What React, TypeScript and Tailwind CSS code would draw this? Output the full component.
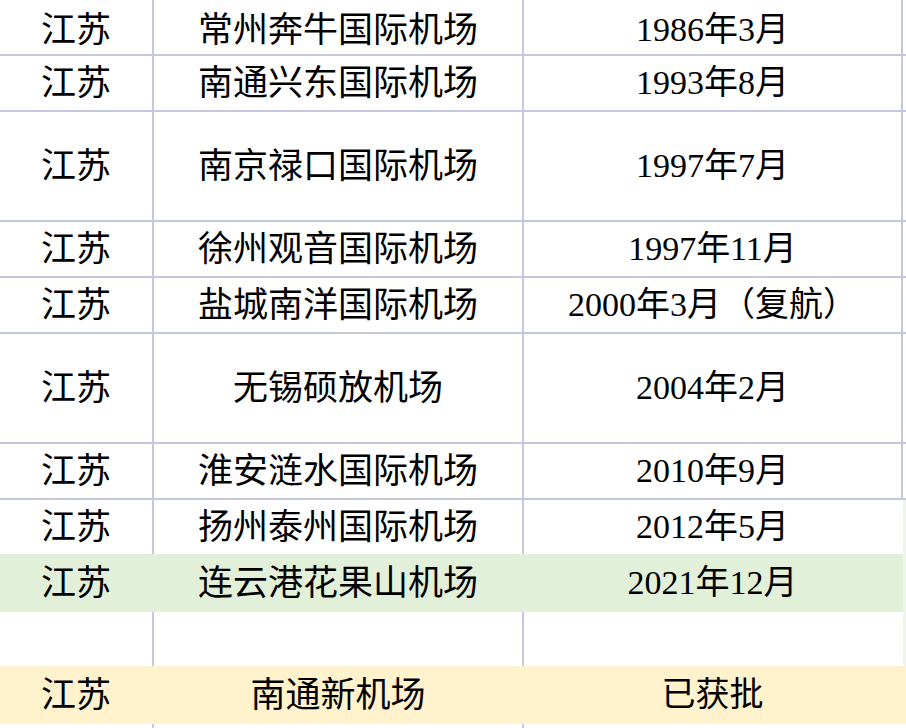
type Row = {
  province: string;
  airport: string;
  date: string;
  h: string;
  pad?: string;
  tone?: "green" | "yellow" | "blank";
  line?: boolean;
  frame?: boolean;
};

const ROWS: Row[] = [
  { province: "江苏", airport: "常州奔牛国际机场", date: "1986年3月", h: "h-[56px]", pad: "pt-[6px]", line: true, frame: true },
  { province: "江苏", airport: "南通兴东国际机场", date: "1993年8月", h: "h-[56px]", line: true, frame: true },
  { province: "江苏", airport: "南京禄口国际机场", date: "1997年7月", h: "h-[110px]", line: true, frame: true },
  { province: "江苏", airport: "徐州观音国际机场", date: "1997年11月", h: "h-[56px]", line: true, frame: true },
  { province: "江苏", airport: "盐城南洋国际机场", date: "2000年3月（复航）", h: "h-[56px]", line: true, frame: true },
  { province: "江苏", airport: "无锡硕放机场", date: "2004年2月", h: "h-[110px]", line: true, frame: true },
  { province: "江苏", airport: "淮安涟水国际机场", date: "2010年9月", h: "h-[56px]", line: true, frame: true },
  { province: "江苏", airport: "扬州泰州国际机场", date: "2012年5月", h: "h-[54px]" },
  { province: "江苏", airport: "连云港花果山机场", date: "2021年12月", h: "h-[58px]", tone: "green" },
  { province: "", airport: "", date: "", h: "h-[54px]", tone: "blank" },
  { province: "江苏", airport: "南通新机场", date: "已获批", h: "h-[58px]", tone: "yellow" },
  { province: "", airport: "", date: "", h: "h-[20px]", tone: "blank" },
];

function TableRow({ row }: { row: Row }) {
  const filled = row.tone === "green" || row.tone === "yellow";
  const bg =
    row.tone === "green" ? "bg-[#e2efd9]" : row.tone === "yellow" ? "bg-[#fff2cc]" : "bg-white";
  const divider = filled ? "border-transparent" : "border-[#c4c8dd]";
  const pad = row.pad ?? "";

  return (
    <div
      className={`flex ${row.h} ${bg} ${
        row.line ? "border-b-2 border-[#c4c8dd]" : ""
      }`}
    >
      <div className={`w-[154px] flex items-center justify-center border-r-2 ${divider} ${pad} text-[35px]`}>
        {row.province}
      </div>
      <div className={`w-[370px] flex items-center justify-center border-r-2 ${divider} ${pad} text-[35px]`}>
        {row.airport}
      </div>
      <div
        className={`w-[379px] flex items-center justify-center border-r-2 ${
          row.frame ? "border-[#c4c8dd]" : "border-transparent"
        } ${pad} text-[34px]`}
      >
        {row.date}
      </div>
      <div className={`flex-1 ${row.tone === "green" || row.tone === "blank" && row.h === "h-[54px]" || !row.frame && !row.tone ? "bg-[#eef5e9]" : ""}`} />
    </div>
  );
}

export default function App() {
  return (
    <div
      className="w-[906px] h-[728px] overflow-hidden bg-white text-black leading-none"
      style={{ fontFamily: '"Liberation Serif", "Noto Sans CJK SC", serif' }}
    >
      {ROWS.map((row, i) => (
        <TableRow key={i} row={row} />
      ))}
    </div>
  );
}
